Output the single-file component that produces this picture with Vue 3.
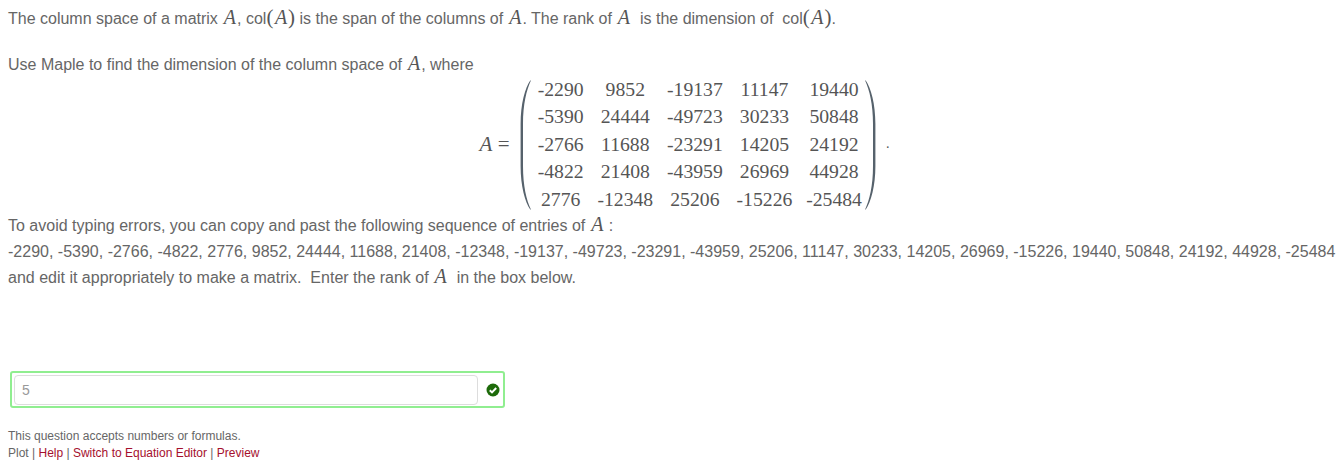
<script setup>
const rows = [
	[-2290, 9852, -19137, 11147, 19440],
	[-5390, 24444, -49723, 30233, 50848],
	[-2766, 11688, -23291, 14205, 24192],
	[-4822, 21408, -43959, 26969, 44928],
	[2776, -12348, 25206, -15226, -25484]
]
const cells = rows.flat()
const sequence = rows[0].map((_, c) => rows.map(r => r[c]).join(', ')).join(', ')
</script>

<template>
	<div class="question">
		<p class="line">
			The column space of a matrix <i class="m">A</i>, col<span class="m paren">(</span><i class="m">A</i><span class="m paren">)</span> is the span of the columns of <i class="m">A</i>. The rank of <i class="m">A</i> &nbsp;is the dimension of &nbsp;col<span class="m paren">(</span><i class="m">A</i><span class="m paren">)</span>.
		</p>
		<p class="line use">Use Maple to find the dimension of the column space of <i class="m">A</i>, where</p>

		<div class="display">
			<i class="m lhs">A</i><span class="m eq">=</span>
			<svg class="brace" viewBox="0 0 11 130" width="11" height="130">
				<path d="M10.400 0.300C5 8 0.600 24 0.600 44L0.600 86C0.600 106 5 122 10.400 129.700L10.800 129.300C6.500 120 3 106 3 86L3 44C3 24 6.500 10 10.800 0.700Z" fill="#56626c" />
			</svg>
			<div class="matrix">
				<span v-for="(c, i) in cells" :key="i">{{ c }}</span>
			</div>
			<svg class="brace" viewBox="0 0 11 130" width="11" height="130">
				<path d="M0.600 0.300C6 8 10.400 24 10.400 44L10.400 86C10.400 106 6 122 0.600 129.700L0.200 129.300C4.500 120 8 106 8 86L8 44C8 24 4.500 10 0.200 0.700Z" fill="#56626c" />
			</svg>
			<span class="m dot">.</span>
		</div>

		<p class="line">To avoid typing errors, you can copy and past the following sequence of entries of <i class="m">A</i> :</p>
		<p class="line seq">{{ sequence }}</p>
		<p class="line">and edit it appropriately to make a matrix. &nbsp;Enter the rank of <i class="m">A</i> &nbsp;in the box below.</p>

		<div class="answer">
			<input class="box" type="text" value="5" readonly />
			<svg class="ok" viewBox="0 0 14 14" width="14" height="14">
				<circle cx="7" cy="7" r="6.500" fill="#1d6a0a" />
				<path d="M3.800 7.200L6 9.400L10.200 5" fill="none" stroke="#fff" stroke-width="2" />
			</svg>
		</div>

		<div class="hint">
			<div>This question accepts numbers or formulas.</div>
			<div>Plot | <a>Help</a> | <a>Switch to Equation Editor</a> | <a>Preview</a></div>
		</div>
	</div>
</template>

<style scoped>
.question {
	padding: 6px 0 0 8px;
	font-family: "Liberation Sans", Arial, sans-serif;
	font-size: 16px;
	line-height: 26px;
	color: #666;
	white-space: nowrap;
	overflow: hidden;
}

.line {
	margin: 0;
}

.use {
	margin-top: 20px;
}

.m {
	padding: 0 1px 0 1.500px;
	font-family: "Liberation Serif", serif;
	font-size: 20px;
	line-height: 1;
	color: #555;
}

.paren {
	padding: 0;
	font-size: 21px;
}

.display {
	display: flex;
	align-items: center;
	height: 134px;
	margin: -1px 0 2px 470px;
}

.lhs {
	margin-right: 3px;
	font-size: 21px;
}

.eq {
	margin-right: 9px;
	font-size: 21px;
}

.brace {
	margin-top: 1px;
}

.matrix {
	display: grid;
	grid-template-columns: repeat(5, auto);
	column-gap: 13.800px;
	row-gap: 5px;
	justify-items: center;
	margin: 0 3.500px 0 7px;
	font-family: "Liberation Serif", serif;
	font-size: 19.700px;
	line-height: 22.400px;
	color: #555;
}

.dot {
	margin-left: 8px;
	font-size: 14px;
}

.answer {
	display: flex;
	align-items: center;
	justify-content: space-between;
	box-sizing: border-box;
	width: 495px;
	height: 37px;
	margin: 80px 0 0 2px;
	padding: 0 3px 0 2px;
	border: 2px solid #90ee90;
	border-radius: 3px;
}

.box {
	box-sizing: border-box;
	width: 464px;
	height: 30px;
	padding: 0 7px;
	border: 1px solid #ddd;
	border-radius: 4px;
	font: 14px "Liberation Sans", Arial, sans-serif;
	color: #999;
	outline: 0;
}

.hint {
	margin-top: 20px;
	font-size: 12px;
	line-height: 16.500px;
}

.hint a {
	color: #a50f2d;
}
</style>

<style>
body {
	background: #fff;
}
</style>
